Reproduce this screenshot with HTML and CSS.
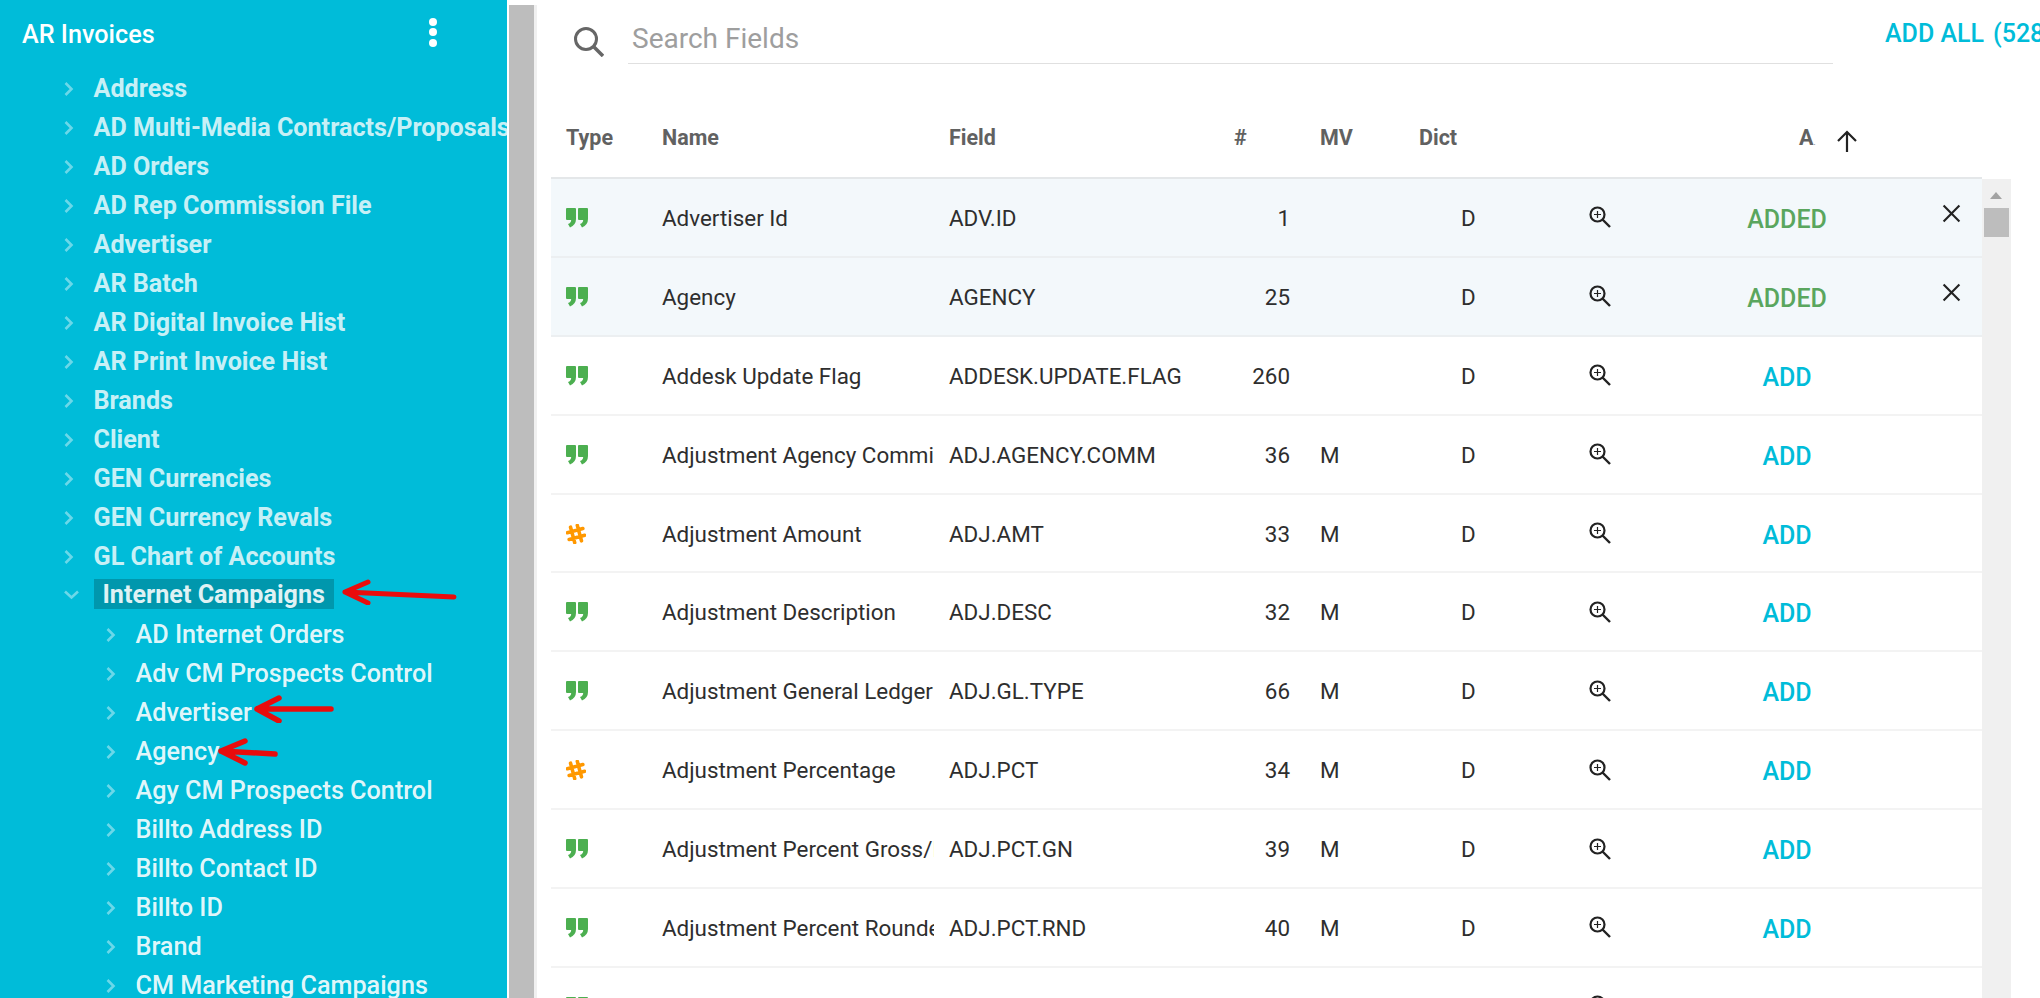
FILE: index.html
```html
<!DOCTYPE html>
<html lang="en">
<head>
  <meta charset="UTF-8" />
  <title>AR Invoices - Fields</title>
  <link rel="stylesheet" href="styles.css">
</head>
<body>

  <svg width="0" height="0" class="defs">
    <symbol id="i-chev" viewBox="0 0 10 14"><path d="M1.500 1l6 6-6 6" fill="none" stroke="currentColor" stroke-width="2.600"/></symbol>
    <symbol id="i-chev-down" viewBox="0 0 15 10"><path d="M1 1.500l6.500 6 6.500-6" fill="none" stroke="currentColor" stroke-width="2.600"/></symbol>
    <symbol id="i-quote" viewBox="0 0 22 20"><path d="M0 1q0-1 1-1h8q1 0 1 1v10q0 6-6 8.500L2 16q3-1 3.200-4H1q-1 0-1-1zM12 1q0-1 1-1h8q1 0 1 1v10q0 6-6 8.500L14 16q3-1 3.200-4H13q-1 0-1-1z" fill="currentColor"/></symbol>
    <symbol id="i-hash" viewBox="0 0 20 20"><path d="M6.500 2v16M13.500 2v16M2 6.500h16M2 13.500h16" transform="rotate(-15 10 10)" fill="none" stroke="currentColor" stroke-width="3.600" stroke-linecap="round"/></symbol>
    <symbol id="i-zoom" viewBox="0 0 22 22"><circle cx="8.500" cy="8.500" r="7" fill="none" stroke="currentColor" stroke-width="2.200"/><path d="M8.500 5v7M5 8.500h7" fill="none" stroke="currentColor" stroke-width="1.200"/><path d="M13.500 13.500l7.500 7.500" fill="none" stroke="currentColor" stroke-width="2.400"/></symbol>
    <symbol id="i-x" viewBox="0 0 18 18"><path d="M1.500 1.500l15 15M16.500 1.500l-15 15" fill="none" stroke="currentColor" stroke-width="2"/></symbol>
  </svg>

  <div class="page">
    <aside class="sidebar">
      <div class="side-head">
        <span class="side-title">AR Invoices</span>
        <span class="dots"><i></i><i></i><i></i></span>
      </div>
      <ul class="tree">
        <li><svg class="chev"><use href="#i-chev"/></svg>Address</li>
        <li><svg class="chev"><use href="#i-chev"/></svg>AD Multi-Media Contracts/Proposals</li>
        <li><svg class="chev"><use href="#i-chev"/></svg>AD Orders</li>
        <li><svg class="chev"><use href="#i-chev"/></svg>AD Rep Commission File</li>
        <li><svg class="chev"><use href="#i-chev"/></svg>Advertiser</li>
        <li><svg class="chev"><use href="#i-chev"/></svg>AR Batch</li>
        <li><svg class="chev"><use href="#i-chev"/></svg>AR Digital Invoice Hist</li>
        <li><svg class="chev"><use href="#i-chev"/></svg>AR Print Invoice Hist</li>
        <li><svg class="chev"><use href="#i-chev"/></svg>Brands</li>
        <li><svg class="chev"><use href="#i-chev"/></svg>Client</li>
        <li><svg class="chev"><use href="#i-chev"/></svg>GEN Currencies</li>
        <li><svg class="chev"><use href="#i-chev"/></svg>GEN Currency Revals</li>
        <li><svg class="chev"><use href="#i-chev"/></svg>GL Chart of Accounts</li>
        <li class="open"><svg class="chev"><use href="#i-chev-down"/></svg><span class="picked">Internet Campaigns</span>
          <svg class="arrow arrow-1" viewBox="0 0 116 26"><path d="M3 13L26 3M3 13l23 11M3 13l109 5" fill="none" stroke="#e90c0c" stroke-width="5" stroke-linecap="round" stroke-linejoin="round"/></svg>
        </li>
        <li class="sub"><svg class="chev"><use href="#i-chev"/></svg>AD Internet Orders</li>
        <li class="sub"><svg class="chev"><use href="#i-chev"/></svg>Adv CM Prospects Control</li>
        <li class="sub"><svg class="chev"><use href="#i-chev"/></svg>Advertiser
          <svg class="arrow arrow-2" viewBox="0 0 80 28"><path d="M3 14L25 3M3 14l22 12M3 14h74" fill="none" stroke="#e90c0c" stroke-width="5.500" stroke-linecap="round" stroke-linejoin="round"/></svg>
        </li>
        <li class="sub"><svg class="chev"><use href="#i-chev"/></svg>Agency
          <svg class="arrow arrow-3" viewBox="0 0 60 28"><path d="M3 13L27 3M3 13l24 12M3 13l54 3" fill="none" stroke="#e90c0c" stroke-width="5.500" stroke-linecap="round" stroke-linejoin="round"/></svg>
        </li>
        <li class="sub"><svg class="chev"><use href="#i-chev"/></svg>Agy CM Prospects Control</li>
        <li class="sub"><svg class="chev"><use href="#i-chev"/></svg>Billto Address ID</li>
        <li class="sub"><svg class="chev"><use href="#i-chev"/></svg>Billto Contact ID</li>
        <li class="sub"><svg class="chev"><use href="#i-chev"/></svg>Billto ID</li>
        <li class="sub"><svg class="chev"><use href="#i-chev"/></svg>Brand</li>
        <li class="sub"><svg class="chev"><use href="#i-chev"/></svg>CM Marketing Campaigns</li>
      </ul>
    </aside>

    <div class="side-scroll"></div>

    <main class="main">
      <div class="search-row">
        <svg class="search-icon" viewBox="0 0 30 30"><circle cx="12" cy="12" r="10.500" fill="none" stroke="#666" stroke-width="3"/><path d="M19.500 19.500L29 29" fill="none" stroke="#666" stroke-width="3.500"/></svg>
        <div class="search-box">Search Fields</div>
        <div class="add-all">ADD ALL<span class="add-count">(528)</span></div>
      </div>

      <div class="thead">
        <div class="c-type">Type</div>
        <div class="c-name">Name</div>
        <div class="c-field">Field</div>
        <div class="c-num">#</div>
        <div class="c-mv">MV</div>
        <div class="c-dict">Dict</div>
        <div class="c-zoom"></div>
        <div class="c-act">A<span class="dot">.</span></div>
        <div class="sort"><svg viewBox="0 0 22 22"><path d="M11 22V2M2 11l9-9 9 9" fill="none" stroke="#222" stroke-width="2.200"/></svg></div>
      </div>

      <div class="tbody">
        <div class="rows" id="rows"></div>
        <div class="vscroll"><span class="up"></span><span class="thumb"></span></div>
      </div>
    </main>
  </div>

  <script src="rows.js"></script>
</body>
</html>
```

FILE: rows.js
```js
const fields = [
  ['q', 'Advertiser Id', 'ADV.ID', 1, '', 'D', true],
  ['q', 'Agency', 'AGENCY', 25, '', 'D', true],
  ['q', 'Addesk Update Flag', 'ADDESK.UPDATE.FLAG', 260, '', 'D'],
  ['q', 'Adjustment Agency Commission', 'ADJ.AGENCY.COMM', 36, 'M', 'D'],
  ['h', 'Adjustment Amount', 'ADJ.AMT', 33, 'M', 'D'],
  ['q', 'Adjustment Description', 'ADJ.DESC', 32, 'M', 'D'],
  ['q', 'Adjustment General Ledger Type', 'ADJ.GL.TYPE', 66, 'M', 'D'],
  ['h', 'Adjustment Percentage', 'ADJ.PCT', 34, 'M', 'D'],
  ['q', 'Adjustment Percent Gross/Net', 'ADJ.PCT.GN', 39, 'M', 'D'],
  ['q', 'Adjustment Percent Rounded', 'ADJ.PCT.RND', 40, 'M', 'D'],
  ['q', 'Adjustment Rounding', 'ADJ.RND', 41, 'M', 'D']
];

let html = '';
fields.forEach(function (f) {
  const icon = f[0] === 'q'
    ? '<svg class="t-quote"><use href="#i-quote"/></svg>'
    : '<svg class="t-hash"><use href="#i-hash"/></svg>';
  html += '<div class="row' + (f[6] ? ' added' : '') + '">' +
    '<div class="c-type">' + icon + '</div>' +
    '<div class="c-name">' + f[1] + '</div>' +
    '<div class="c-field">' + f[2] + '</div>' +
    '<div class="c-num">' + f[3] + '</div>' +
    '<div class="c-mv">' + f[4] + '</div>' +
    '<div class="c-dict">' + f[5] + '</div>' +
    '<div class="c-zoom"><svg class="zoom"><use href="#i-zoom"/></svg></div>' +
    '<div class="c-act">' + (f[6] ? '<span class="added-txt">ADDED</span>' : '<span class="add-txt">ADD</span>') + '</div>' +
    '<div class="c-x">' + (f[6] ? '<svg class="x"><use href="#i-x"/></svg>' : '') + '</div>' +
    '</div>';
});
document.getElementById('rows').innerHTML = html;
```

FILE: styles.css
```css
html, body {
  margin: 0;
  padding: 0;
  height: 100%;
  overflow: hidden;
  background: #fff;
  font-family: 'Roboto', sans-serif;
}

.defs {
  position: absolute;
}

.page {
  display: flex;
  height: 998px;
  overflow: hidden;
}

/* left tree */
.sidebar {
  width: 507px;
  flex: none;
  background: #00bcd9;
  overflow: hidden;
  color: #fff;
}

.side-head {
  height: 70px;
  padding-left: 22px;
  display: flex;
  align-items: flex-start;
  position: relative;
}

.side-title {
  font-size: 25.200px;
  font-weight: 500;
  line-height: 28px;
  margin-top: 21px;
}

.dots {
  position: absolute;
  left: 429px;
  top: 18px;
  display: flex;
  flex-direction: column;
  gap: 2.300px;
}

.dots i {
  width: 8px;
  height: 8px;
  border-radius: 50%;
  background: #fff;
}

.tree {
  list-style: none;
  margin: 0;
  padding: 0;
}

.tree li {
  position: relative;
  height: 39px;
  line-height: 37px;
  font-size: 25.150px;
  font-weight: 700;
  white-space: nowrap;
  color: rgba(255,255,255,0.8);
  padding-left: 93.500px;
}

.tree li.sub {
  padding-left: 135.500px;
  font-weight: 500;
  font-size: 25.200px;
  color: rgba(255,255,255,0.9);
}

.tree li.open {
  color: rgba(255,255,255,0.88);
}

.chev {
  position: absolute;
  left: 64px;
  top: 12px;
  width: 10px;
  height: 14px;
  color: rgba(255,255,255,0.42);
}

.open .chev {
  width: 15px;
  height: 10px;
  top: 13px;
}

.sub .chev {
  left: 106px;
}

.picked {
  display: inline-block;
  height: 30px;
  line-height: 31px;
  padding: 0 9px;
  margin-top: 2px;
  vertical-align: top;
  background: #0097ad;
}

.arrow {
  position: absolute;
  display: block;
}

.arrow-1 {
  left: 342px;
  top: 2px;
  width: 116px;
  height: 26px;
}

.arrow-2 {
  left: 254px;
  top: 1px;
  width: 80px;
  height: 28px;
}

.arrow-3 {
  left: 218px;
  top: 5px;
  width: 60px;
  height: 28px;
}

/* grey bar next to the tree */
.side-scroll {
  width: 25px;
  flex: none;
  margin-left: 2px;
  margin-top: 5px;
  background: #bdbdbd;
  border-right: 3px solid #f0f0f0;
}

/* right part */
.main {
  flex: 1;
  min-width: 0;
  overflow: hidden;
}

.search-row {
  height: 64px;
  display: flex;
  align-items: flex-start;
}

.search-icon {
  width: 30px;
  height: 30px;
  margin: 27px 0 0 37px;
  flex: none;
}

.search-box {
  width: 1205px;
  height: 64px;
  flex: none;
  margin-left: 24px;
  box-sizing: border-box;
  padding: 0 4px;
  border-bottom: 1px solid #e0e0e0;
  font-size: 28px;
  line-height: 78px;
  color: #9e9e9e;
}

.add-all {
  margin-left: 52px;
  margin-top: 18px;
  font-size: 25px;
  font-weight: 500;
  line-height: 32px;
  color: #00bcd9;
  white-space: nowrap;
}

.add-count {
  margin-left: 9px;
}

.thead,
.row {
  display: flex;
  align-items: center;
}

.thead {
  height: 115px;
  width: 1431px;
  margin-left: 14px;
  box-sizing: border-box;
  padding-top: 34px;
  font-size: 21.500px;
  font-weight: 700;
  color: #616161;
  border-bottom: 2px solid #e4e7e9;
}

.c-type { width: 111px; flex: none; padding-left: 15px; box-sizing: border-box; }
.c-name { width: 272px; flex: none; white-space: nowrap; overflow: hidden; }
.c-field { width: 300px; flex: none; padding-left: 15px; box-sizing: border-box; white-space: nowrap; }
.c-num { width: 56px; flex: none; text-align: right; }
.c-mv { width: 129px; flex: none; padding-left: 30px; box-sizing: border-box; }
.c-dict { width: 170px; flex: none; padding-left: 42px; box-sizing: border-box; }
.c-zoom { width: 111px; flex: none; }
.c-act { width: 174px; flex: none; text-align: center; padding-top: 3px; box-sizing: border-box; }
.c-x { width: 100px; flex: none; padding-left: 68px; box-sizing: border-box; }

.thead .c-num { text-align: left; }
.thead .c-dict { padding-left: 0; }
.thead .c-act {
  width: 136px;
  text-align: left;
  padding-left: 99px;
  padding-top: 0;
}

.dot { font-size: 8px; font-weight: 400; }

.sort {
  width: 22px;
  height: 22px;
  margin-top: 6px;
}

.sort svg { width: 22px; height: 22px; display: block; }

.tbody {
  position: relative;
  width: 1460px;
  margin-left: 14px;
  height: 819px;
  overflow: hidden;
}

.rows {
  width: 1431px;
}

.row {
  height: 78.900px;
  box-sizing: border-box;
  padding-top: 1px;
  border-bottom: 2px solid #f3f3f3;
  font-size: 22.400px;
  color: #2e2e2e;
}

.row.added {
  background: #f3f8fb;
  border-bottom-color: #eceff1;
}

.t-quote {
  width: 22px;
  height: 20px;
  color: #4caf50;
  display: block;
}

.t-hash {
  width: 20px;
  height: 20px;
  color: #ff9800;
  display: block;
}

.zoom {
  width: 22px;
  height: 22px;
  color: #222;
  display: block;
  margin-top: -1px;
}

.x {
  width: 19px;
  height: 19px;
  color: #222;
  display: block;
  margin-top: -9px;
}

.added-txt {
  font-size: 25px;
  font-weight: 500;
  color: #5aa65e;
}

.add-txt {
  font-size: 25px;
  font-weight: 500;
  color: #00bcd9;
}

.vscroll {
  position: absolute;
  right: 0;
  top: 0;
  bottom: 0;
  width: 29px;
  background: #f0f0f0;
}

.vscroll .up {
  position: absolute;
  left: 8px;
  top: 13px;
  border-left: 6.500px solid transparent;
  border-right: 6.500px solid transparent;
  border-bottom: 7px solid #a3a3a3;
}

.vscroll .thumb {
  position: absolute;
  left: 2px;
  top: 29px;
  width: 25px;
  height: 29px;
  background: #bdbdbd;
}
```
